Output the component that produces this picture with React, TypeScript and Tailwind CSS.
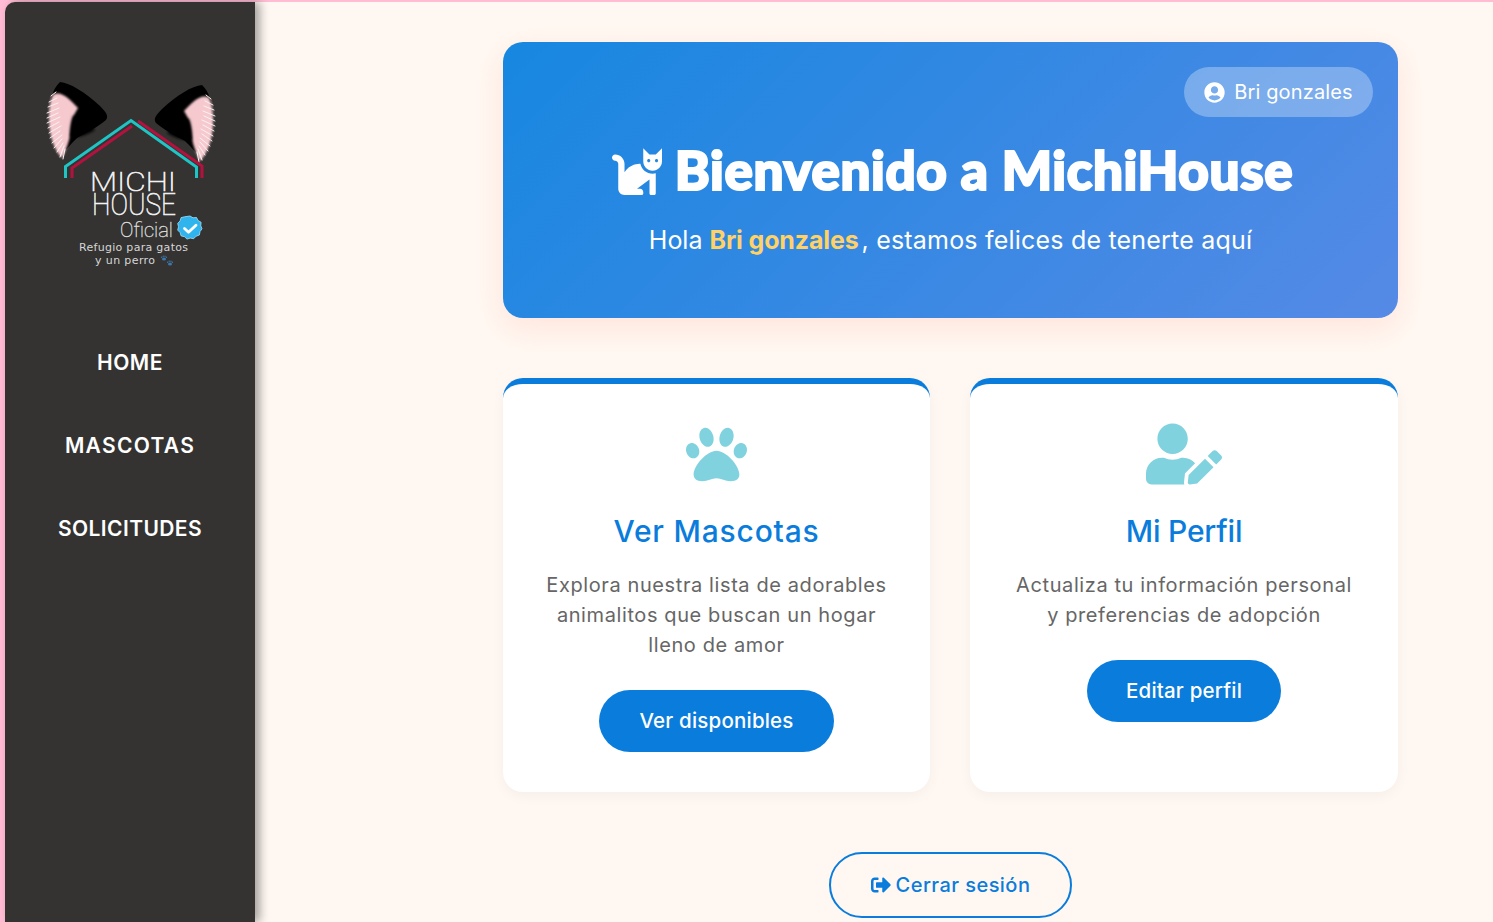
import { FaCat, FaPaw, FaSignOutAlt, FaUserCircle, FaUserEdit } from "react-icons/fa";

const font = "font-['Inter','Liberation_Sans',sans-serif]";

// fur tufts along the outer edge of the ear
const fur = [
    [56, 92, 51, 96], [57, 98, 49, 102], [58, 103, 48, 107], [59, 108, 47, 113], [58, 113, 47, 118],
    [60, 117, 47, 123], [59, 122, 48, 128], [61, 126, 49, 133], [60, 131, 50, 138], [62, 135, 52, 143],
    [62, 139, 54, 148], [63, 143, 57, 152], [64, 146, 60, 157], [65, 149, 63, 159],
];

function LittlePaw({ x, y }: { x: number; y: number }) {
    return (
        <g transform={`translate(${x} ${y})`} fill="#3b78ad">
            <ellipse cx="0" cy="1" rx="2" ry="1.600" />
            <circle cx="-2.400" cy="-0.800" r="0.700" />
            <circle cx="-0.800" cy="-1.800" r="0.700" />
            <circle cx="1" cy="-1.800" r="0.700" />
            <circle cx="2.400" cy="-0.800" r="0.700" />
        </g>
    );
}

function Logo() {
    return (
        <svg viewBox="5 2 250 278" className="block w-[250px] h-[278px] font-['Roboto',sans-serif]">
            <defs>
                <filter id="soft05" x="-20%" y="-20%" width="140%" height="140%"><feGaussianBlur stdDeviation="0.700" /></filter>
                <filter id="soft1" x="-20%" y="-20%" width="140%" height="140%"><feGaussianBlur stdDeviation="1.200" /></filter>
                <filter id="soft2" x="-30%" y="-30%" width="160%" height="160%"><feGaussianBlur stdDeviation="1.500" /></filter>
                <g id="ear">
                    <path d="M60 82C70 83 85 92 100 106C106 112 109 116 106 120C98 127 86 133 77 138L72 143L66 150C58 140 52 125 50 110C50 100 52 90 60 82Z" fill="#060606" filter="url(#soft05)" />
                    <path d="M53 95C60 90 69 98 78 108C74 114 72 120 71 128C70 140 66 150 62 158C54 150 49 135 49 118C49 108 50 100 53 95Z" fill="#f6c9cf" filter="url(#soft1)" />
                    <g stroke="#f8f2f1" strokeWidth="1" strokeLinecap="round" filter="url(#soft05)">
                        {fur.map(([a, b, c, d]) => <line key={`${a}-${b}`} x1={a} y1={b} x2={c} y2={d} />)}
                    </g>
                    <path d="M73 116C79 113 86 118 95 130C88 134 80 138 70 137C70 128 71 122 73 116Z" fill="#000" filter="url(#soft2)" />
                </g>
            </defs>
            <use href="#ear" />
            <use href="#ear" transform="matrix(-1 0 0 1 262 3)" />
            <path d="M72 178V168L132 126M138 121L202 166V178" fill="none" stroke="#b3123f" strokeWidth="3" />
            <path d="M65.500 178V166.500L131 120.500L196.500 167V178" fill="none" stroke="#1fc4c4" strokeWidth="3" />
            <text x="90" y="191" textLength="86" lengthAdjust="spacingAndGlyphs" fontSize="25" fontWeight="100" fill="#f2f2f2" stroke="#f2f2f2" strokeWidth="0.600">MICHI</text>
            <text x="92" y="215" textLength="84" lengthAdjust="spacingAndGlyphs" fontSize="31" fontWeight="100" fill="#f2f2f2" stroke="#f2f2f2" strokeWidth="0.600">HOUSE</text>
            <text x="120" y="237" textLength="53" lengthAdjust="spacingAndGlyphs" fontSize="21" fontWeight="100" fill="#d8d8d8" stroke="#d8d8d8" strokeWidth="0.400">Oficial</text>
            <path d="M190 216l3 1.800 3.500-.3 1.600 3 3 1.800-.3 3.500 1.200 3-2 2.800-.6 3.400-3.300 1.200-2.400 2.500-3.400-.6-3.300 1-2.500-2.400-3.400-.8-1-3.300-2.400-2.500.8-3.400-.8-3.300 2.400-2.500 1-3.300 3.400-.8z" fill="#2fb4ee" stroke="#a5e0f7" strokeWidth="0.800" />
            <path d="M184.500 228.500l4 3.800 7.500-7" fill="none" stroke="#fff" strokeWidth="2.800" strokeLinecap="round" strokeLinejoin="round" />
            <text x="79" y="251" textLength="109" fontSize="11" fill="#d6d6d6" className="font-['DejaVu_Sans',sans-serif]">Refugio para gatos</text>
            <text x="95" y="264" textLength="60" fontSize="11" fill="#d6d6d6" className="font-['DejaVu_Sans',sans-serif]">y un perro</text>
            <LittlePaw x={164} y={258} />
            <LittlePaw x={170} y={263} />
        </svg>
    );
}

function Sidebar() {
    const links = [
        { label: "HOME", spacing: "tracking-[0.5px]" },
        { label: "MASCOTAS", spacing: "tracking-[1.3px]" },
        { label: "SOLICITUDES", spacing: "tracking-[0.4px]" },
    ];
    return (
        <aside className="relative z-10 w-[250px] shrink-0 bg-[#343332] rounded-tl-[10px] shadow-[5px_0_10px_rgba(0,0,0,0.35)]">
            <Logo />
            <nav className="flex flex-col pt-[41px]">
                {links.map((l) => (
                    <a key={l.label} href="#" className={`h-[83px] flex items-center justify-center text-[21px] font-semibold text-white ${l.spacing}`}>{l.label}</a>
                ))}
            </nav>
        </aside>
    );
}

type CardProps = {
    icon: React.ReactNode;
    title: string;
    titleSpacing: string;
    text: string[];
    action: string;
    width: string;
    actionWidth: string;
};

function Card({ icon, title, titleSpacing, text, action, width, actionWidth }: CardProps) {
    return (
        <div className={`${width} flex flex-col items-center bg-white rounded-[20px] border-t-[6px] border-[#0a7cdc] pt-[39px] pb-[40px] shadow-[0_4px_14px_rgba(0,0,0,0.04)]`}>
            <div className="h-[62px] flex items-center justify-center text-[#80d2de]">{icon}</div>
            <h2 className={`mt-[24px] text-[30px] leading-[44px] font-medium text-[#0a7cdc] ${titleSpacing}`}>{title}</h2>
            <p className="mt-[17px] text-center text-[#666] text-[20px] tracking-[0.6px] leading-[30px]">
                {text.map((t) => <span key={t} className="block">{t}</span>)}
            </p>
            <a href="#" className={`mt-[30px] h-[62px] rounded-full bg-[#0a7cdc] text-white text-[20.500px] tracking-[0.2px] font-medium flex items-center justify-center ${actionWidth}`}>{action}</a>
        </div>
    );
}

export default function App() {
    return (
        <div className={`${font} h-[922px] overflow-hidden bg-[#ffbcd4] pt-[2px] pl-[5px] flex`}>
            <Sidebar />
            <main className="flex-1 bg-[#fff8f2] pl-[248px] pt-[40px]">
                <div className="w-[895px]">
                    <section className="relative h-[276px] rounded-[20px] bg-[linear-gradient(135deg,#1787e0,#558ae6)] shadow-[0_10px_30px_rgba(255,170,150,0.25)] flex flex-col items-center text-white">
                        <div className="absolute top-[25px] right-[25px] h-[50px] w-[189px] rounded-full bg-white/30 flex items-center justify-center gap-[9px] text-[20px] tracking-[0.15px]">
                            <FaUserCircle className="text-[21px]" />
                            <span>Bri gonzales</span>
                        </div>
                        <h1 className="mt-[96px] ml-[4px] h-[64px] flex items-center gap-[13px] font-black">
                            <FaCat className="text-[50px]" />
                            <span className="font-['Lato',sans-serif] text-[53px] tracking-[0.6px] [-webkit-text-stroke:2.200px_white]">Bienvenido a MichiHouse</span>
                        </h1>
                        <p className="mt-[20px] text-[25px] leading-[36px]">
                            Hola <span className="font-bold text-[#ffd166] tracking-[-0.15px]">Bri gonzales</span> <span className="ml-[-4px] tracking-[0.2px]">, estamos felices de tenerte aquí</span>
                        </p>
                    </section>
                    <div className="mt-[60px] flex gap-[40px]">
                        <Card
                            width="w-[427px]"
                            actionWidth="w-[235px]"
                            titleSpacing="tracking-[0.8px]"
                            icon={<FaPaw className="text-[61px]" />}
                            title="Ver Mascotas"
                            text={["Explora nuestra lista de adorables", "animalitos que buscan un hogar", "lleno de amor"]}
                            action="Ver disponibles"
                        />
                        <Card
                            width="w-[428px]"
                            actionWidth="w-[194px]"
                            titleSpacing="tracking-[-0.2px]"
                            icon={<FaUserEdit className="text-[76px]" />}
                            title="Mi Perfil"
                            text={["Actualiza tu información personal", "y preferencias de adopción"]}
                            action="Editar perfil"
                        />
                    </div>
                    <div className="mt-[60px] flex justify-center">
                        <a href="#" className="h-[66px] w-[243px] rounded-full border-2 border-[#0a7cdc] text-[#0a7cdc] text-[20px] tracking-[0.45px] font-medium flex items-center justify-center gap-[5px]">
                            <FaSignOutAlt className="text-[20px]" />
                            Cerrar sesión
                        </a>
                    </div>
                </div>
            </main>
        </div>
    );
}
